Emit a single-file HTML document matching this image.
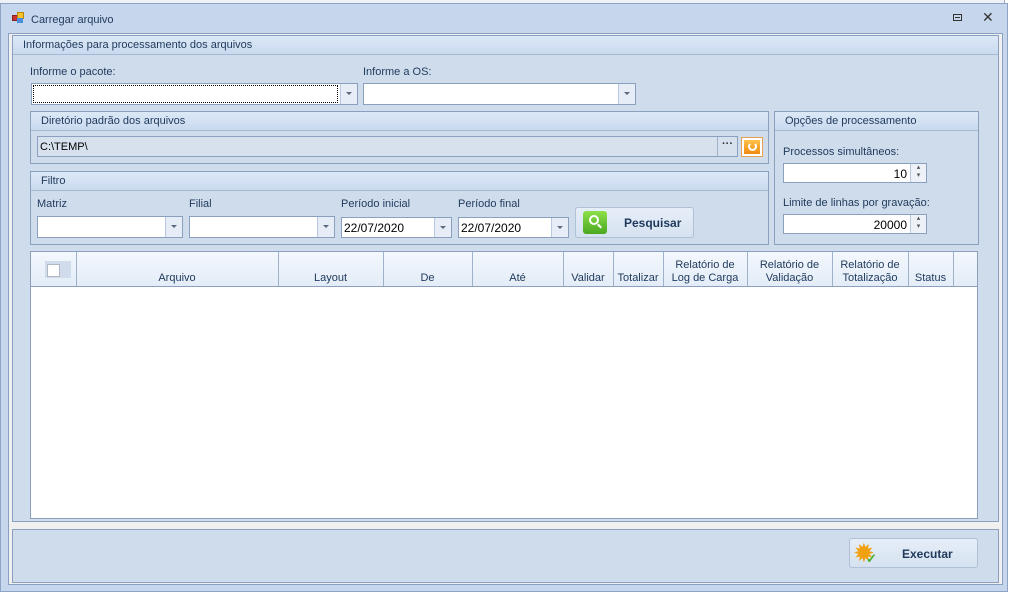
<!DOCTYPE html><html><head><style>
*{box-sizing:border-box;margin:0;padding:0}
body{width:1013px;height:592px;background:#fff;position:relative;overflow:hidden;font-family:"Liberation Sans",sans-serif;font-size:11px;color:#1e395b}
.a{position:absolute}
.bd{border:1px solid #8ba0bf}
.hdr{background:linear-gradient(#dce8f6,#c9daef);border-bottom:1px solid #a6bad6;height:19px;padding:3px 0 0 10px;font-size:11px;color:#1e395b}
.inp{background:#fff;border:1px solid #8ba0bf}
.dd{position:absolute;right:0;top:0;bottom:0;width:17px;border-left:1px solid #b8c8de;background:#e6edf7}
.dd:after{content:"";position:absolute;left:5px;top:8px;border-left:3px solid transparent;border-right:3px solid transparent;border-top:3px solid #5a6a80}
.lbl{position:absolute;font-size:11px;color:#1e395b}
.col{position:absolute;top:0;bottom:0;border-left:1px solid #9fb2cc}
.ch{position:absolute;font-size:11px;text-align:center;line-height:13px;color:#1e395b}
</style></head><body>
<div class="a" style="left:0;top:0;width:1013px;height:4px;background:#eef2f8"></div>
<div class="a" style="left:1004px;top:0;width:9px;height:592px;background:#fff;border-left:1px solid #aab"></div>
<div class="a bd" style="left:0;top:3px;width:1008px;height:589px;background:#c6d7ed;border-color:#8ea4c4"></div>
<div class="a" style="left:12px;top:12px;width:12px;height:12px">
<div class="a" style="left:0;top:3px;width:6px;height:6px;background:#c33;border:1px solid #822"></div>
<div class="a" style="left:5px;top:0;width:7px;height:7px;background:#f5c030;border:1px solid #b80"></div>
<div class="a" style="left:5px;top:6px;width:6px;height:5px;background:#4a8ee0"></div></div>
<div class="lbl" style="left:31px;top:14px;color:#1e395b">Carregar arquivo</div>
<div class="a" style="left:953px;top:14px;width:9px;height:7px;border:1px solid #333"><div class="a" style="left:1px;top:2px;width:5px;height:1px;background:#333"></div></div>
<div class="a" style="left:982px;top:9px;font-size:14px;color:#333">✕</div>
<div class="a" style="left:8px;top:33px;width:995px;height:552px;background:#f0f0f0;border:1px solid #8ba0bf"></div>
<div class="a bd" style="left:12px;top:35px;width:987px;height:487px;background:#cfdcec">
<div class="hdr">Informações para processamento dos arquivos</div></div>
<div class="lbl" style="left:30px;top:66px">Informe o pacote:</div>
<div class="a inp" style="left:31px;top:83px;width:327px;height:22px"><div class="a" style="left:1px;top:1px;right:19px;bottom:1px;border:1px dotted #000"></div><div class="dd"></div></div>
<div class="lbl" style="left:363px;top:66px">Informe a OS:</div>
<div class="a inp" style="left:363px;top:83px;width:273px;height:22px"><div class="dd"></div></div>
<div class="a bd" style="left:30px;top:111px;width:739px;height:53px;background:#cfdcec"><div class="hdr">Diretório padrão dos arquivos</div></div>
<div class="a bd" style="left:37px;top:136px;width:701px;height:21px;background:#d7e1ee"><div class="a" style="left:2px;top:4px;color:#000">C:\TEMP\</div><div class="a" style="right:0;top:0;bottom:0;width:20px;border-left:1px solid #9fb2cc;text-align:center;color:#333;font-weight:bold;line-height:14px">···</div></div>
<div class="a" style="left:741px;top:137px;width:22px;height:20px;background:#fff;border:1px solid #e8a050"><div class="a" style="left:2px;top:2px;width:16px;height:14px;background:linear-gradient(#ffc24a,#f08a10)"></div><div class="a" style="left:6px;top:4px;width:9px;height:9px;border:2px solid #fff;border-radius:50%;border-top-color:transparent"></div></div>
<div class="a bd" style="left:774px;top:111px;width:205px;height:134px;background:#cfdcec"><div class="hdr">Opções de processamento</div></div>
<div class="lbl" style="left:783px;top:146px">Processos simultâneos:</div>
<div class="a inp" style="left:783px;top:163px;width:144px;height:20px"><div class="a" style="right:19px;top:3px;color:#000;font-size:12px">10</div><div class="a" style="right:0;top:0;bottom:0;width:16px;border-left:1px solid #b8c8de;background:#eef2f8;font-size:7px;color:#555;text-align:center;line-height:8px">▴<br>▾</div></div>
<div class="lbl" style="left:783px;top:197px">Limite de linhas por gravação:</div>
<div class="a inp" style="left:783px;top:214px;width:144px;height:20px"><div class="a" style="right:19px;top:3px;color:#000;font-size:12px">20000</div><div class="a" style="right:0;top:0;bottom:0;width:16px;border-left:1px solid #b8c8de;background:#eef2f8;font-size:7px;color:#555;text-align:center;line-height:8px">▴<br>▾</div></div>
<div class="a bd" style="left:30px;top:171px;width:739px;height:74px;background:#cfdcec"><div class="hdr">Filtro</div></div>
<div class="lbl" style="left:37px;top:198px">Matriz</div>
<div class="lbl" style="left:189px;top:198px">Filial</div>
<div class="lbl" style="left:341px;top:198px">Período inicial</div>
<div class="lbl" style="left:458px;top:198px">Período final</div>
<div class="a inp" style="left:37px;top:216px;width:146px;height:22px"><div class="dd"></div></div>
<div class="a inp" style="left:189px;top:216px;width:146px;height:22px"><div class="dd"></div></div>
<div class="a inp" style="left:341px;top:217px;width:111px;height:21px"><div class="a" style="left:2px;top:3px;color:#000;font-size:12px">22/07/2020</div><div class="dd"></div></div>
<div class="a inp" style="left:458px;top:217px;width:111px;height:21px"><div class="a" style="left:2px;top:3px;color:#000;font-size:12px">22/07/2020</div><div class="dd"></div></div>
<div class="a" style="left:575px;top:207px;width:119px;height:31px;border:1px solid #b0c0d6;border-radius:3px;background:linear-gradient(#e6eef8,#d6e2f0)"><div class="a" style="left:7px;top:3px;width:24px;height:23px;border-radius:3px;background:linear-gradient(#8ee04a,#4aa820)"><div class="a" style="left:6px;top:4px;width:10px;height:10px;border:2px solid #fff;border-radius:50%"></div><div class="a" style="left:14px;top:14px;width:5px;height:2px;background:#fff;transform:rotate(45deg)"></div></div><div class="a" style="left:48px;top:8px;font-weight:bold;color:#1e395b;font-size:12px">Pesquisar</div></div>
<div class="a bd" style="left:30px;top:251px;width:948px;height:268px;background:#fff">
<div class="a" style="left:0;top:0;right:0;height:35px;background:linear-gradient(#f4f8fd,#e3ecf7);border-bottom:1px solid #8ba0bf">
<div class="a" style="left:14px;top:9px;width:26px;height:17px;background:#d0dcec"><div class="a" style="left:2px;top:3px;width:13px;height:13px;background:#fff;border:1px solid #b0b8c4"></div></div>
<div class="col" style="left:45px"></div><div class="col" style="left:247px"></div><div class="col" style="left:352px"></div><div class="col" style="left:441px"></div><div class="col" style="left:532px"></div><div class="col" style="left:582px"></div><div class="col" style="left:632px"></div><div class="col" style="left:716px"></div><div class="col" style="left:801px"></div><div class="col" style="left:877px"></div><div class="col" style="left:922px"></div>
<div class="ch" style="left:45px;width:202px;top:20px">Arquivo</div>
<div class="ch" style="left:247px;width:105px;top:20px">Layout</div>
<div class="ch" style="left:352px;width:89px;top:20px">De</div>
<div class="ch" style="left:441px;width:91px;top:20px">Até</div>
<div class="ch" style="left:532px;width:50px;top:20px">Validar</div>
<div class="ch" style="left:582px;width:50px;top:20px">Totalizar</div>
<div class="ch" style="left:632px;width:84px;top:7px">Relatório de<br>Log de Carga</div>
<div class="ch" style="left:716px;width:85px;top:7px">Relatório de<br>Validação</div>
<div class="ch" style="left:801px;width:76px;top:7px">Relatório de<br>Totalização</div>
<div class="ch" style="left:877px;width:45px;top:20px">Status</div>
</div></div>
<div class="a bd" style="left:12px;top:529px;width:987px;height:54px;background:#cfdcec"></div>
<div class="a" style="left:849px;top:538px;width:129px;height:30px;border:1px solid #b0c0d6;border-radius:3px;background:linear-gradient(#e6eef8,#d6e2f0)">
<div class="a" style="left:3px;top:1px;font-size:26px;line-height:26px;color:#f0a010">✹</div>
<div class="a" style="left:16px;top:12px;font-size:13px;color:#4ab030;font-weight:bold">✓</div>
<div class="a" style="left:52px;top:8px;font-weight:bold;color:#1e395b;font-size:12px">Executar</div></div>
</body></html>
